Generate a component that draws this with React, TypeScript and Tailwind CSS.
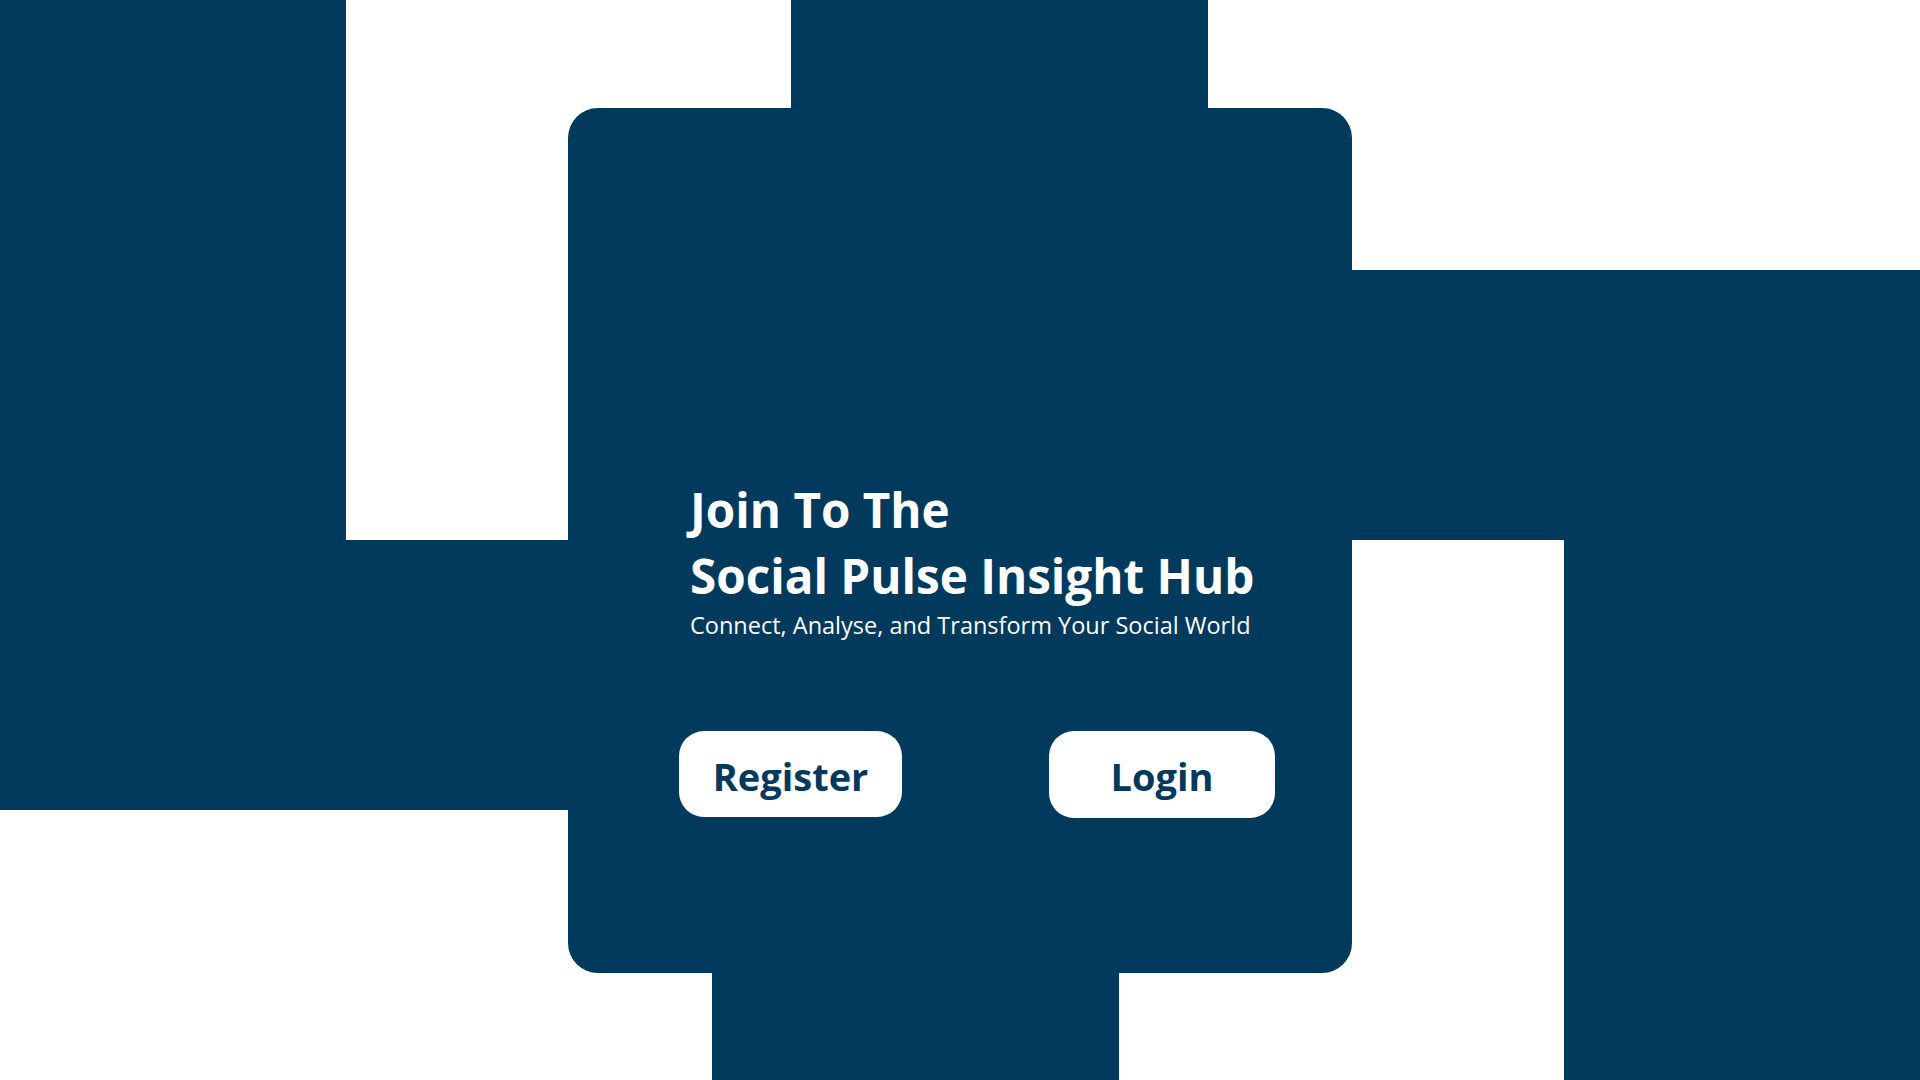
export default function App() {
    return (
        <div
            className="w-[1920px] h-[1080px] overflow-hidden bg-white grid grid-cols-[346px_222px_144px_79px_328px_89px_144px_212px_356px] grid-rows-[108px_162px_270px_270px_163px_107px]"
            style={{ fontFamily: '"Open Sans", "Noto Sans", sans-serif' }}
        >
            {/* background blocks */}
            <div className="col-start-1 col-end-2 row-start-1 row-end-5 bg-[#023a5e]" />
            <div className="col-start-2 col-end-3 row-start-4 row-end-5 bg-[#023a5e]" />
            <div className="col-start-5 col-end-7 row-start-1 row-end-2 bg-[#023a5e]" />
            <div className="col-start-8 col-end-10 row-start-3 row-end-4 bg-[#023a5e]" />
            <div className="col-start-9 col-end-10 row-start-4 row-end-7 bg-[#023a5e]" />
            <div className="col-start-4 col-end-6 row-start-6 row-end-7 bg-[#023a5e]" />

            {/* Card */}
            <div className="col-start-3 col-end-8 row-start-2 row-end-6 bg-[#023a5e] rounded-[30px] pt-[369px] flex flex-col">
                <div className="pl-[122px] text-white">
                    <h1 className="text-[47.6px] leading-[66px] font-bold">
                        Join To The
                        <br />
                        Social Pulse Insight Hub
                    </h1>
                    <p className="text-[23.5px] leading-[32px]">
                        Connect, Analyse, and Transform Your Social World
                    </p>
                </div>

                <div className="mt-[90px] pl-[111px] flex gap-[147px]">
                    <button className="w-[223px] h-[86px] pt-[4px] bg-white rounded-[25px] text-[#023a5e] text-[38px] font-bold flex items-center justify-center">
                        Register
                    </button>
                    <button className="w-[226px] h-[87px] pt-[4px] bg-white rounded-[25px] text-[#023a5e] text-[38px] font-bold flex items-center justify-center">
                        Login
                    </button>
                </div>
            </div>
        </div>
    );
}
